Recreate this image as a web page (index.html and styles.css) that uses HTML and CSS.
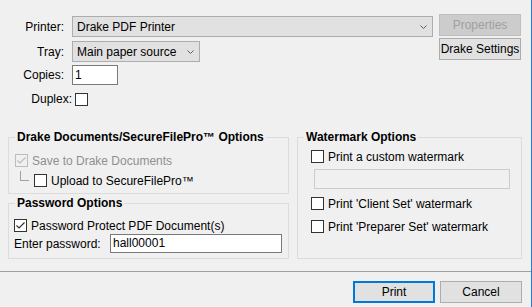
FILE: index.html
```html
<!DOCTYPE html>
<html>
  <head>
    <meta charset="UTF-8">
    <title>Print</title>
    <link rel="stylesheet" href="styles.css">
  </head>
  <body>
    <div class="dialog">

      <div class="top">
        <div class="fields">
          <div class="row">
            <label class="lbl">Printer:</label>
            <div class="select">
              <span>Drake PDF Printer</span>
              <svg class="chevron" width="7" height="4" viewBox="0 0 7 4"><polyline points="0.5,0.5 3.5,3.5 6.5,0.5"/></svg>
            </div>
          </div>
          <div class="row row-tray">
            <label class="lbl">Tray:</label>
            <div class="select select-tray">
              <span>Main paper source</span>
              <svg class="chevron" width="7" height="4" viewBox="0 0 7 4"><polyline points="0.5,0.5 3.5,3.5 6.5,0.5"/></svg>
            </div>
          </div>
          <div class="row row-copies">
            <label class="lbl">Copies:</label>
            <div class="textbox copies">1</div>
          </div>
          <div class="row row-duplex">
            <label class="lbl lbl-duplex">Duplex:</label>
            <span class="check"></span>
          </div>
        </div>
        <div class="side">
          <button class="btn btn-disabled">Properties</button>
          <button class="btn">Drake Settings</button>
        </div>
      </div>

      <div class="groups">
        <div class="col-left">
          <div class="group group-docs">
            <div class="group-title">Drake Documents/SecureFilePro™ Options</div>
            <div class="opt opt-save">
              <span class="check check-disabled">
                <svg width="11" height="11" viewBox="0 0 11 11"><polyline points="1.5,5.5 4,8 9.5,2.5"/></svg>
              </span>
              <span class="opt-text muted">Save to Drake Documents</span>
            </div>
            <div class="opt opt-upload">
              <span class="tree"></span>
              <span class="check"></span>
              <span class="opt-text">Upload to SecureFilePro™</span>
            </div>
          </div>

          <div class="group group-pass">
            <div class="group-title">Password Options</div>
            <div class="opt opt-protect">
              <span class="check">
                <svg width="11" height="11" viewBox="0 0 11 11"><polyline points="1.5,5.5 4,8 9.5,2.5"/></svg>
              </span>
              <span class="opt-text">Password Protect PDF Document(s)</span>
            </div>
            <div class="opt opt-password">
              <span>Enter password:</span>
              <div class="textbox password">hall00001</div>
            </div>
          </div>
        </div>

        <div class="group group-water">
          <div class="group-title">Watermark Options</div>
          <div class="opt opt-custom">
            <span class="check"></span>
            <span class="opt-text">Print a custom watermark</span>
          </div>
          <div class="textbox textbox-disabled watermark"></div>
          <div class="opt opt-client">
            <span class="check"></span>
            <span class="opt-text">Print 'Client Set' watermark</span>
          </div>
          <div class="opt opt-preparer">
            <span class="check"></span>
            <span class="opt-text">Print 'Preparer Set' watermark</span>
          </div>
        </div>
      </div>

      <div class="footer">
        <div class="separator"></div>
        <div class="actions">
          <button class="btn btn-default">Print</button>
          <button class="btn">Cancel</button>
        </div>
      </div>

    </div>
  </body>
</html>
```

FILE: styles.css
```css
body {
  margin: 0;
  padding: 0;
  font-family: "Liberation Sans", Arial, sans-serif;
  font-size: 12px;
  color: #000;
  background-color: #f0f0f0;
}

.dialog {
  width: 531px;
  height: 307px;
  border-right: 1px solid #1c7fd6;
  background-color: #f0f0f0;
  overflow: hidden;
}

/* top: printer settings */
.top {
  display: flex;
  height: 137px;
  box-sizing: border-box;
  padding: 14px 10px 0 0;
}

.fields {
  flex: 1;
  padding-top: 2px;
}

.row {
  display: flex;
  align-items: center;
}

.row-tray {
  margin-top: 4px;
}

.row-copies {
  margin-top: 3px;
}

.row-duplex {
  margin-top: 7px;
}

.lbl {
  width: 64px;
  margin-right: 8px;
  text-align: right;
  line-height: 14px;
}

.lbl-duplex {
  width: 72px;
  margin-right: 3px;
}

.select {
  flex: 1;
  display: flex;
  align-items: center;
  justify-content: space-between;
  height: 21px;
  box-sizing: border-box;
  padding: 0 5px 0 4px;
  background-color: #e1e1e1;
  border: 1px solid #adadad;
}

.select-tray {
  flex: none;
  width: 128px;
}

.chevron {
  fill: none;
  stroke: #606060;
  stroke-width: 1;
}

.textbox {
  height: 20px;
  box-sizing: border-box;
  padding: 0 2px;
  line-height: 18px;
  background-color: #fff;
  border: 1px solid #7a7a7a;
}

.copies {
  width: 46px;
}

.textbox-disabled {
  background-color: #f0f0f0;
  border-color: #cccccc;
}

.side {
  display: flex;
  flex-direction: column;
  gap: 2px;
  width: 82px;
  margin-left: 6px;
}

.btn {
  height: 22px;
  width: 82px;
  padding: 0;
  font-family: inherit;
  font-size: 12px;
  color: #000;
  background-color: #e1e1e1;
  border: 1px solid #adadad;
  border-radius: 0;
}

.btn-disabled {
  color: #a0a0a0;
  background-color: #cccccc;
  border-color: #bfbfbf;
}

.btn-default {
  border: 2px solid #0078d7;
}

/* checkboxes */
.check {
  display: inline-flex;
  align-items: center;
  justify-content: center;
  flex: none;
  width: 13px;
  height: 13px;
  box-sizing: border-box;
  background-color: #fff;
  border: 1px solid #333;
}

.check svg {
  fill: none;
  stroke: #333;
  stroke-width: 1.2;
}

.check-disabled {
  background-color: #f0f0f0;
  border-color: #bcbcbc;
}

.check-disabled svg {
  stroke: #bcbcbc;
}

/* group boxes */
.groups {
  display: flex;
  gap: 8px;
  padding: 0 9px 0 8px;
}

.col-left {
  display: flex;
  flex-direction: column;
  width: 281px;
}

.group {
  box-sizing: border-box;
  border: 1px solid #dcdcdc;
}

.group-title {
  width: max-content;
  margin: -8px 0 0 6px;
  padding: 0 2px;
  line-height: 14px;
  font-weight: bold;
  background-color: #f0f0f0;
}

.group-docs {
  height: 57px;
}

.group-pass {
  height: 56px;
  margin-top: 9px;
}

.group-water {
  width: 225px;
  height: 122px;
}

.opt {
  display: flex;
  align-items: center;
  height: 13px;
  line-height: 14px;
}

.opt-text {
  margin-left: 4px;
  white-space: nowrap;
}

.muted {
  color: #8f8f8f;
}

.opt-save {
  margin-top: 10px;
  padding-left: 6px;
}

.opt-upload {
  margin-top: 7px;
  padding-left: 11px;
}

.tree {
  align-self: flex-start;
  width: 8px;
  height: 9px;
  margin: -3px 5px 0 0;
  border-left: 1px solid #a0a0a0;
  border-bottom: 1px solid #a0a0a0;
}

.opt-protect {
  margin-top: 9px;
  padding-left: 5px;
}

.opt-password {
  height: 19px;
  margin-top: 2px;
  padding: 0 6px 0 5px;
  justify-content: space-between;
}

.password {
  width: 172px;
  height: 19px;
  line-height: 17px;
}

.opt-custom {
  margin-top: 6px;
  padding-left: 13px;
}

.watermark {
  width: 196px;
  margin: 6px 0 0 16px;
}

.opt-client {
  margin-top: 8px;
  padding-left: 13px;
}

.opt-preparer {
  margin-top: 10px;
  padding-left: 13px;
}

/* bottom buttons */
.separator {
  height: 1px;
  margin-top: 12px;
  background-color: #a0a0a0;
}

.actions {
  display: flex;
  justify-content: flex-end;
  gap: 5px;
  margin-top: 9px;
  padding-right: 9px;
}
```
